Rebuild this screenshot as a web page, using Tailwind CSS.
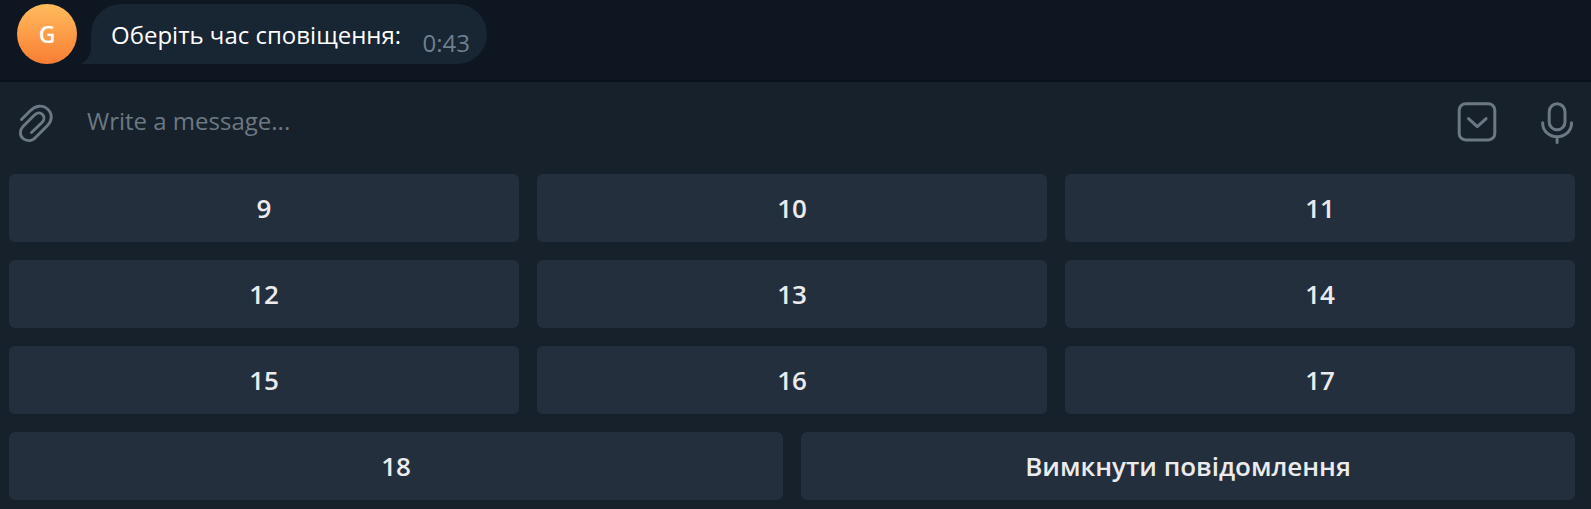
<!DOCTYPE html>
<html lang="uk">
<head>
<meta charset="utf-8">
<title>Chat</title>
<script src="https://cdn.jsdelivr.net/npm/@tailwindcss/browser@4"></script>
</head>
<body class="flex h-[509px] w-[1591px] flex-col overflow-hidden bg-[#17212b] font-['Open_Sans','Noto_Sans',sans-serif]">
  <main class="flex h-[82px] shrink-0 items-start border-b-2 border-[#0a121b] bg-[#0e1621] pt-1 pl-[17px]">
    <div class="flex size-[60px] items-center justify-center rounded-full bg-linear-to-b from-[#ffbb5c] to-[#f87d33] text-[23px] font-semibold text-white">G</div>
    <div class="flex pl-1">
      <svg class="h-[60px] w-[11px]" viewBox="0 0 11 60" fill="#182533"><path d="M11 34h-1v10C10 51 6 57 0 59.500V60h11z"/></svg>
      <div class="-ml-px flex h-[60px] w-[396px] rounded-[30px] rounded-bl-none bg-[#182533] pl-5">
        <p class="pt-[13px] text-[24px] leading-[36px] whitespace-nowrap text-white">Оберіть час сповіщення:</p>
        <time class="ml-auto pt-[23px] pr-[17px] text-[24px] leading-[32px] text-[#6d7f8f]">0:43</time>
      </div>
    </div>
  </main>
  <section class="flex h-[92px] shrink-0 items-start">
    <svg class="mt-[21px] ml-[17px] size-[40px]" viewBox="0 0 40 40" fill="none" stroke="#6c7883" stroke-width="2.900" stroke-linecap="round"><path d="M4.500 16.500 13 8C18.500 2.500 25.500 1.500 30.500 6S35.500 17.500 30.500 22.500L18.500 34.500C15 38.500 9.500 38.500 6 35.500S2.500 27 6 23.500L17.500 12C20 9.500 23.500 9.500 25.500 11.500S27.500 17 25 19.500L14.500 29.500"/></svg>
    <p class="pt-[21px] pl-[30px] text-[24px] leading-[36px] text-[#6c7883]">Write a message...</p>
    <svg class="mt-[18px] ml-auto size-[44px]" viewBox="0 0 44 44" fill="none" stroke="#6c7883" stroke-width="3" stroke-linecap="round" stroke-linejoin="round"><rect x="4.200" y="3.700" width="35.600" height="36.200" rx="6.500"/><path d="m13.500 18.700 8.800 8 8.800-8"/></svg>
    <svg class="mt-[18px] mr-[16px] ml-[40px] h-[44px] w-[36px]" viewBox="0 0 36 44" fill="none" stroke="#6c7883" stroke-width="3" stroke-linecap="round"><rect x="10.200" y="3.800" width="15.800" height="26" rx="7.900"/><path d="M3.700 22.700v.8a14.400 13.200 0 0 0 28.800 0v-.8M18.100 37v5.500"/></svg>
  </section>
  <section class="flex flex-col gap-[18px] pr-4 pl-[9px] text-[26px] leading-none font-semibold text-[#ebebed]">
    <div class="grid grid-cols-3 gap-[18px]">
      <button class="h-[68px] rounded-md bg-[#242f3d]">9</button>
      <button class="h-[68px] rounded-md bg-[#242f3d]">10</button>
      <button class="h-[68px] rounded-md bg-[#242f3d]">11</button>
      <button class="h-[68px] rounded-md bg-[#242f3d]">12</button>
      <button class="h-[68px] rounded-md bg-[#242f3d]">13</button>
      <button class="h-[68px] rounded-md bg-[#242f3d]">14</button>
      <button class="h-[68px] rounded-md bg-[#242f3d]">15</button>
      <button class="h-[68px] rounded-md bg-[#242f3d]">16</button>
      <button class="h-[68px] rounded-md bg-[#242f3d]">17</button>
    </div>
    <div class="grid grid-cols-2 gap-[18px]">
      <button class="h-[68px] rounded-md bg-[#242f3d]">18</button>
      <button class="h-[68px] rounded-md bg-[#242f3d]">Вимкнути повідомлення</button>
    </div>
  </section>
</body>
</html>
